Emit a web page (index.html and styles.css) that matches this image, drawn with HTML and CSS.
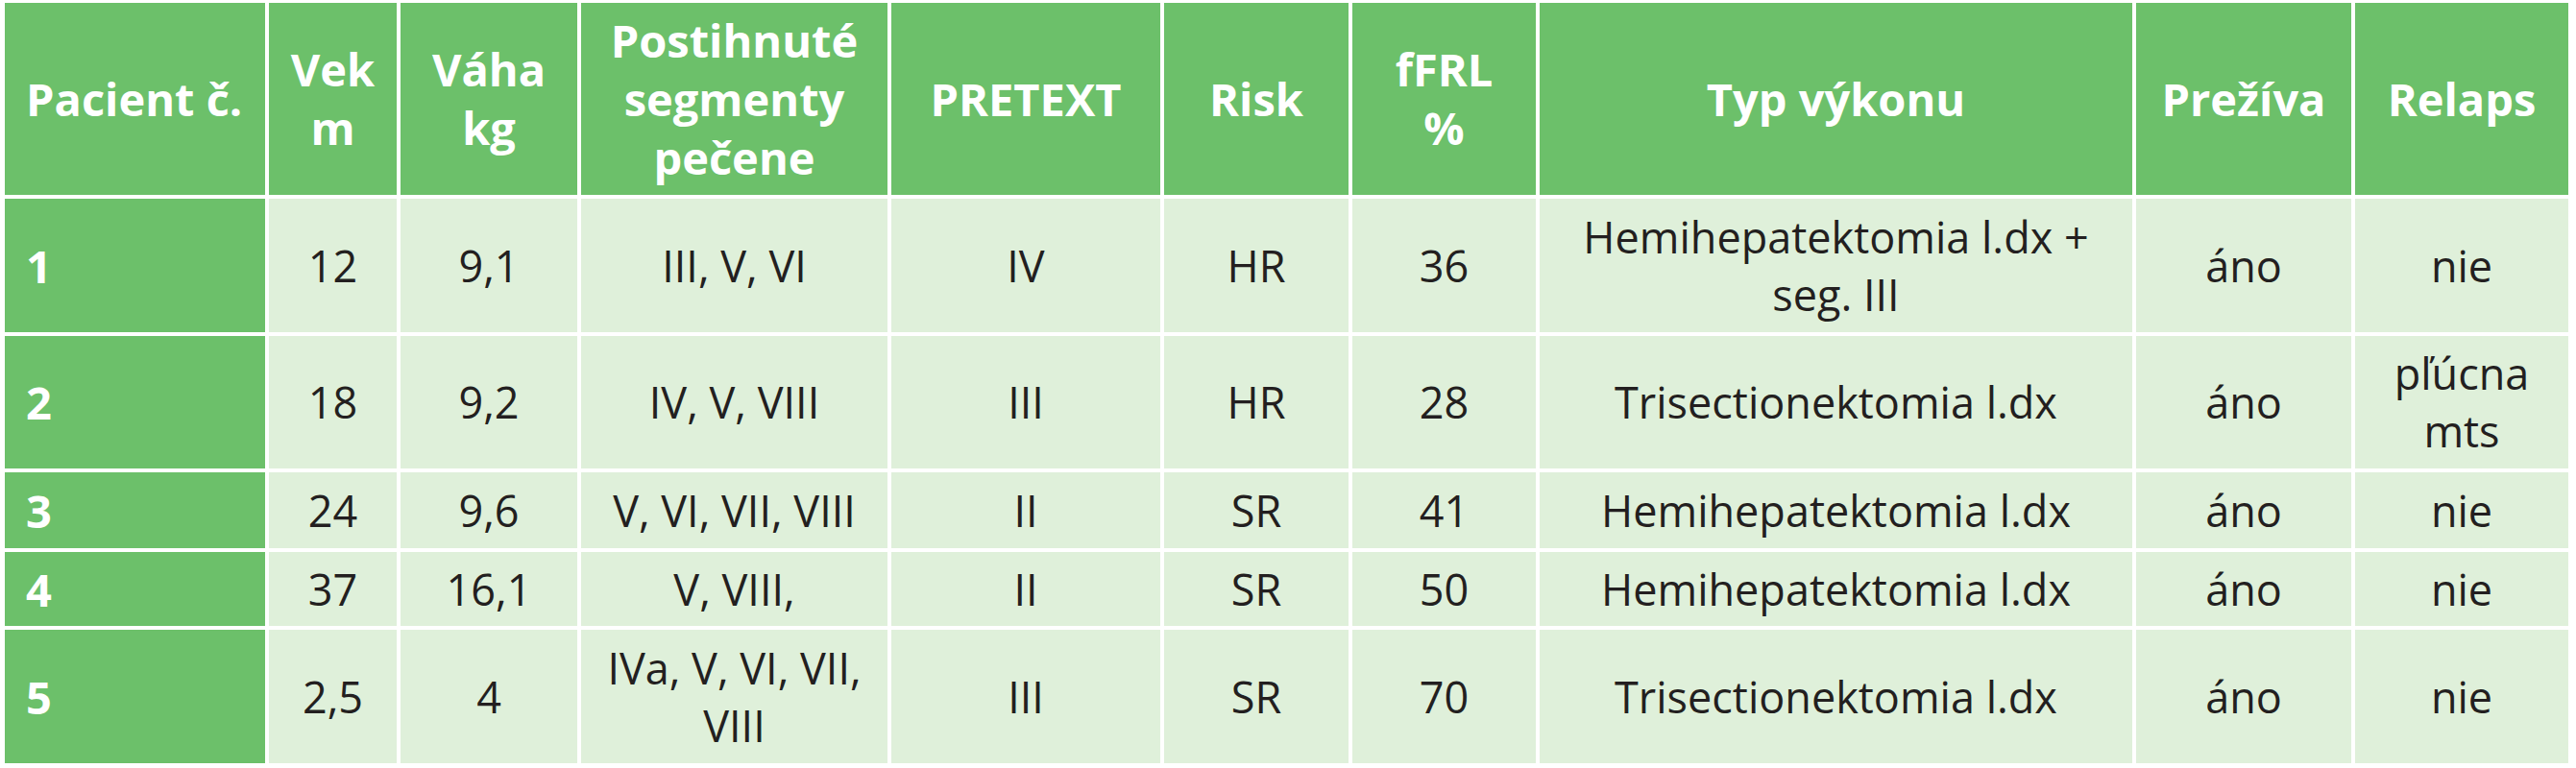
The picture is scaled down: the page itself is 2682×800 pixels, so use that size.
FILE: index.html
```html
<!DOCTYPE html>
<html lang="sk">
<head>
<meta charset="utf-8">
<title>Pacienti</title>
<link rel="stylesheet" href="styles.css">
</head>
<body>
<div class="table">
  <div class="cell head first">Pacient č.</div>
  <div class="cell head">Vek<br>m</div>
  <div class="cell head">Váha<br>kg</div>
  <div class="cell head">Postihnuté<br>segmenty<br>pečene</div>
  <div class="cell head">PRETEXT</div>
  <div class="cell head">Risk</div>
  <div class="cell head">fFRL<br>%</div>
  <div class="cell head">Typ výkonu</div>
  <div class="cell head">Prežíva</div>
  <div class="cell head">Relaps</div>

  <div class="cell num">1</div>
  <div class="cell">12</div>
  <div class="cell">9,1</div>
  <div class="cell">III, V, VI</div>
  <div class="cell">IV</div>
  <div class="cell">HR</div>
  <div class="cell">36</div>
  <div class="cell">Hemihepatektomia l.dx +<br>seg. III</div>
  <div class="cell">áno</div>
  <div class="cell">nie</div>

  <div class="cell num">2</div>
  <div class="cell">18</div>
  <div class="cell">9,2</div>
  <div class="cell">IV, V, VIII</div>
  <div class="cell">III</div>
  <div class="cell">HR</div>
  <div class="cell">28</div>
  <div class="cell">Trisectionektomia l.dx</div>
  <div class="cell">áno</div>
  <div class="cell">pľúcna<br>mts</div>

  <div class="cell num">3</div>
  <div class="cell">24</div>
  <div class="cell">9,6</div>
  <div class="cell">V, VI, VII, VIII</div>
  <div class="cell">II</div>
  <div class="cell">SR</div>
  <div class="cell">41</div>
  <div class="cell">Hemihepatektomia l.dx</div>
  <div class="cell">áno</div>
  <div class="cell">nie</div>

  <div class="cell num">4</div>
  <div class="cell">37</div>
  <div class="cell">16,1</div>
  <div class="cell">V, VIII,</div>
  <div class="cell">II</div>
  <div class="cell">SR</div>
  <div class="cell">50</div>
  <div class="cell">Hemihepatektomia l.dx</div>
  <div class="cell">áno</div>
  <div class="cell">nie</div>

  <div class="cell num">5</div>
  <div class="cell">2,5</div>
  <div class="cell">4</div>
  <div class="cell">IVa, V, VI, VII,<br>VIII</div>
  <div class="cell">III</div>
  <div class="cell">SR</div>
  <div class="cell">70</div>
  <div class="cell">Trisectionektomia l.dx</div>
  <div class="cell">áno</div>
  <div class="cell">nie</div>
</div>
</body>
</html>
```
FILE: styles.css
```css
html, body {
  margin: 0;
  padding: 0;
  background: #ffffff;
}

body {
  font-family: "Open Sans", "Noto Sans", sans-serif;
  font-size: 45px;
  line-height: 60px;
  color: #231f20;
  padding: 3px 0 0 5px;
}

.table {
  display: grid;
  grid-template-columns: 271px 133px 184px 319px 280px 192px 191px 617px 224px 222px;
  grid-template-rows: 200px 139px 138px 79px 77px 139px;
  gap: 4px;
  width: 2669px;
}

.cell {
  display: flex;
  align-items: center;
  justify-content: center;
  text-align: center;
  background: #dff0da;
  padding: 0 8px;
  font-variant-ligatures: none;
}

.head {
  background: #6cc06a;
  color: #ffffff;
  font-size: 47px;
  font-weight: 700;
  line-height: 61px;
}

.first {
  justify-content: flex-start;
  text-align: left;
  padding-left: 22px;
  white-space: nowrap;
}

.num {
  background: #6cc06a;
  color: #ffffff;
  font-size: 47px;
  font-weight: 700;
  justify-content: flex-start;
  padding-left: 22px;
}
```
